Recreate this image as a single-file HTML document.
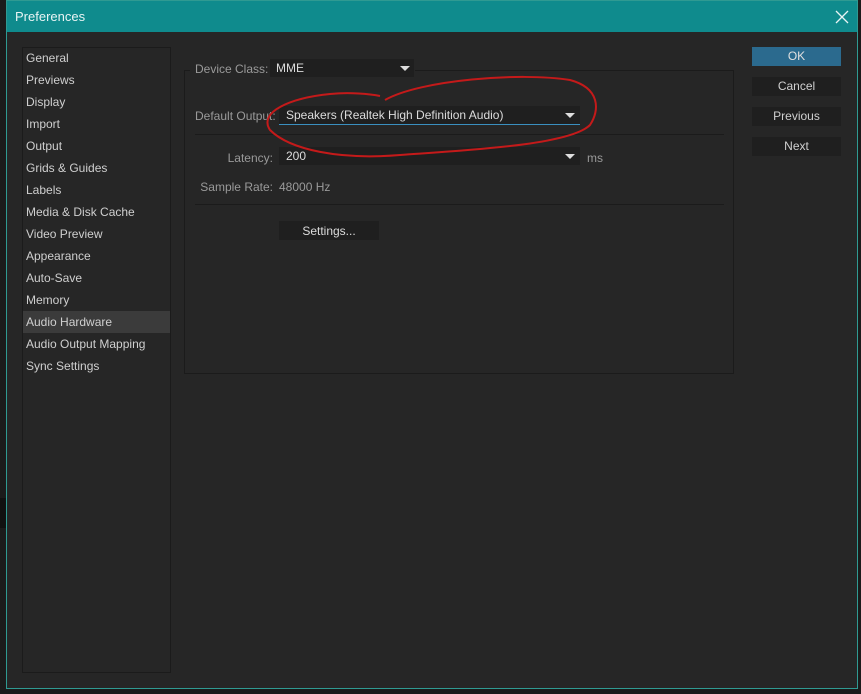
<!DOCTYPE html>
<html><head><style>
body{margin:0;width:861px;height:694px;background:#1b1b1b;position:relative;overflow:hidden;font-family:"Liberation Sans",sans-serif;font-size:12px;color:#c8c8c8}
.a{position:absolute}
.dlg{left:6px;top:0;width:852px;height:689px;background:#262626;border:1px solid #2f9a92;box-sizing:border-box}
.title{left:7px;top:1px;width:850px;height:31px;background:#0f8b8d;color:#e8f4f4;font-size:13px}
.side{left:22px;top:47px;width:149px;height:626px;border:1px solid #1b1b1b;box-sizing:border-box}
.it{position:absolute;left:3px;height:21px;line-height:21px;color:#cfcfcf}
.btn{position:absolute;left:752px;width:89px;height:19px;background:#1f1f1f;text-align:center;line-height:19px;color:#d0d0d0}
.lab{position:absolute;color:#9a9a9a;text-align:right;width:120px}
.dd{position:absolute;background:#1f1f1f;height:18px;line-height:19px;color:#dcdcdc}
.tri{position:absolute;width:0;height:0;border-left:5px solid transparent;border-right:5px solid transparent;border-top:5px solid #ddd}
</style></head><body>
<div class="a" style="left:0;top:498px;width:6px;height:30px;background:#111"></div>
<div class="a dlg"></div>
<div class="a title"><span class="a" style="left:8px;top:8px">Preferences</span>
<svg class="a" style="left:828px;top:9px" width="14" height="14"><path d="M1,1 L13,13 M13,1 L1,13" stroke="#e8f4f4" stroke-width="1.3"/></svg></div>
<div class="a side">
<div class="a" style="left:0;top:263px;width:147px;height:22px;background:#3b3b3b"></div>
<div class="it" style="top:0">General</div><div class="it" style="top:22px">Previews</div><div class="it" style="top:44px">Display</div><div class="it" style="top:66px">Import</div><div class="it" style="top:88px">Output</div><div class="it" style="top:110px">Grids &amp; Guides</div><div class="it" style="top:132px">Labels</div><div class="it" style="top:154px">Media &amp; Disk Cache</div><div class="it" style="top:176px">Video Preview</div><div class="it" style="top:198px">Appearance</div><div class="it" style="top:220px">Auto-Save</div><div class="it" style="top:242px">Memory</div><div class="it" style="top:264px">Audio Hardware</div><div class="it" style="top:286px">Audio Output Mapping</div><div class="it" style="top:308px">Sync Settings</div>
</div>
<div class="a" style="left:184px;top:70px;width:550px;height:304px;border:1px solid #1b1b1b;box-sizing:border-box"></div>
<div class="a" style="left:190px;top:60px;width:225px;height:20px;background:#262626"></div>
<div class="lab" style="left:195px;top:62px;text-align:left">Device Class:</div>
<div class="dd" style="left:270px;top:59px;width:144px"><span style="padding-left:6px">MME</span><div class="tri" style="left:130px;top:7px"></div></div>
<div class="lab" style="left:195px;top:109px;text-align:left">Default Output:</div>
<div class="dd" style="left:279px;top:106px;width:301px;border-bottom:1px solid #3a8fbf"><span style="padding-left:7px">Speakers (Realtek High Definition Audio)</span><div class="tri" style="left:286px;top:7px"></div></div>
<div class="a" style="left:195px;top:134px;width:529px;height:1px;background:#1b1b1b"></div>
<div class="lab" style="left:153px;top:151px">Latency:</div>
<div class="dd" style="left:279px;top:147px;width:301px"><span style="padding-left:7px">200</span><div class="tri" style="left:286px;top:7px"></div></div>
<div class="lab" style="left:587px;top:151px;text-align:left">ms</div>
<div class="lab" style="left:153px;top:180px">Sample Rate:</div>
<div class="lab" style="left:279px;top:180px;text-align:left">48000 Hz</div>
<div class="a" style="left:195px;top:204px;width:529px;height:1px;background:#1b1b1b"></div>
<div class="dd" style="left:279px;top:221px;width:100px;height:19px;text-align:center;line-height:20px">Settings...</div>
<div class="btn" style="top:47px;background:#2b6a8e;color:#e0e0e0">OK</div>
<div class="btn" style="top:77px">Cancel</div>
<div class="btn" style="top:107px">Previous</div>
<div class="btn" style="top:137px">Next</div>
<svg class="a" style="left:0;top:0" width="861" height="694"><path d="M385,100 C420,80 520,72 570,80 C600,88 600,110 590,125 C570,145 470,150 400,155 C340,160 290,150 270,130 C258,112 290,98 330,94 C350,92 370,94 380,96" fill="none" stroke="#c41a1a" stroke-width="2"/></svg>
</body></html>
